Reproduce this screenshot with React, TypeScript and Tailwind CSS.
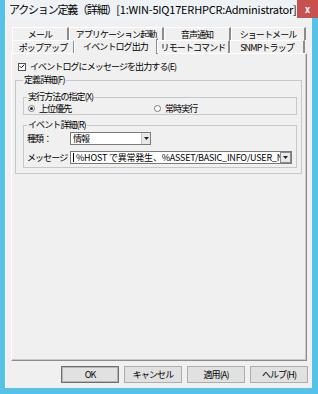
import { Check } from 'lucide-react';

function BackTab({ label, w }: { label: string; w: string }) {
  return (
    <div className={`${w} h-[13px] flex items-center justify-center whitespace-nowrap border-t border-l border-t-white border-l-white border-r-2 border-r-[#8c8c8c] bg-[#f0f0f0]`}>
      {label}
    </div>
  );
}

function Radio({ checked, label }: { checked?: boolean; label: string }) {
  return (
    <div className="flex items-center gap-[4px]">
      <span className="w-[7px] h-[7px] rounded-full border border-[#7a7a7a] bg-white flex items-center justify-center">
        {checked && <span className="w-[3px] h-[3px] rounded-full bg-[#222]" />}
      </span>
      <span>{label}</span>
    </div>
  );
}

function Arrow() {
  return (
    <svg width="5" height="3" viewBox="0 0 5 3">
      <path d="M0 0h5L2.5 3z" fill="#222" />
    </svg>
  );
}

function Btn({ label, def }: { label: string; def?: boolean }) {
  return (
    <button
      className={`w-[58px] h-[17px] flex items-center justify-center bg-[#e1e1e1] border ${
        def ? 'border-[#6e6e6e] shadow-[inset_0_0_0_1px_#b5b5b5]' : 'border-[#adadad]'
      }`}
    >
      {label}
    </button>
  );
}

export default function App() {
  return (
    <div className="w-[318px] h-[394px] bg-[#56c2e8] flex flex-col pl-[5px] pr-[6px] pb-[6px] overflow-hidden text-[9px] tracking-[-0.9px] leading-none text-black font-['Noto_Sans_CJK_JP',sans-serif]">
      {/* title bar */}
      <div className="h-[21px] bg-[#eef2f4] flex items-start justify-between">
        <span className="pl-[4px] pt-[4px] text-[11px] whitespace-nowrap">
          <span className="tracking-[-1.2px]">アクション定義（詳細）</span>
          <span className="tracking-[-0.2px]">[1:WIN-5IQ17ERHPCR:Administrator]</span>
        </span>
        <div className="w-[22px] h-[18px] mr-[1px] shrink-0 bg-[#c75050] flex items-center justify-center text-white text-[9px] font-bold tracking-normal">
          x
        </div>
      </div>

      {/* client area */}
      <div className="flex-1 bg-[#f0f0f0] border-l border-white flex flex-col">
        <div className="mt-[6px] ml-[5px] mr-[5px] flex flex-col">
          {/* tab rows */}
          <div className="flex pl-[1px]">
            <BackTab label="メール" w="w-[57px]" />
            <BackTab label="アプリケーション起動" w="w-[95px]" />
            <BackTab label="音声通知" w="w-[67px]" />
            <BackTab label="ショートメール" w="w-[75px]" />
          </div>
          <div className="flex pl-[1px] h-[13px] items-end relative z-10">
            <BackTab label="ポップアップ" w="w-[63px]" />
            <div className="w-[84px] h-[16px] -ml-[1px] -mr-[1px] mb-[-1px] flex items-center justify-center whitespace-nowrap bg-[#f0f0f0] border-t border-l border-t-white border-l-white border-r-2 border-r-[#8c8c8c]">
              イベントログ出力
            </div>
            <BackTab label="リモートコマンド" w="w-[73px]" />
            <BackTab label="SNMPトラップ" w="w-[75px]" />
          </div>

          {/* tab panel */}
          <div className="h-[308px] border border-t-white border-l-white border-r-[#8c8c8c] border-b-[#8c8c8c] shadow-[inset_-1px_-1px_0_#c8c8c8] flex flex-col">
            <div className="mt-[8px] ml-[6px] flex items-center gap-[4px]">
              <span className="w-[8px] h-[8px] border border-[#555] bg-white flex items-center justify-center">
                <Check size={7} strokeWidth={4} />
              </span>
              <span>イベントログにメッセージを出力する(E)</span>
            </div>

            {/* 定義詳細 */}
            <fieldset className="min-w-0 mt-[3px] ml-[3px] mr-[4px] border border-[#c4c8cc] p-0">
              <legend className="ml-[7px] px-[1px] h-[12px] leading-[12px]">定義詳細(F)</legend>
              <div className="pl-[7px] pr-[4px] pt-[5px] pb-[5px] flex flex-col">
                <fieldset className="min-w-0 border border-[#c4c8cc] p-0">
                  <legend className="ml-[3px] px-[1px] h-[12px] leading-[12px]">実行方法の指定(X)</legend>
                  <div className="h-[10px] mb-[1px] pl-[4px] flex items-center">
                    <div className="w-[126px]">
                      <Radio checked label="上位優先" />
                    </div>
                    <Radio label="常時実行" />
                  </div>
                </fieldset>

                <fieldset className="min-w-0 mt-[4px] border border-[#c4c8cc] p-0">
                  <legend className="ml-[3px] px-[1px] h-[12px] leading-[12px]">イベント詳細(R)</legend>
                  <div className="pl-[3px] pr-[4px] pt-[1px] pb-[3px] flex flex-col gap-[6px]">
                    <div className="flex items-center">
                      <span className="w-[43px] whitespace-nowrap">種類：</span>
                      <div className="w-[81px] h-[13px] bg-white border border-[#7a7a7a] flex items-center justify-between">
                        <span className="pl-[2px]">情報</span>
                        <span className="w-[9px] h-[11px] bg-[#e8e8e8] border-l border-[#c8c8c8] flex items-center justify-center">
                          <Arrow />
                        </span>
                      </div>
                    </div>
                    <div className="flex items-center">
                      <span className="w-[43px] whitespace-nowrap">メッセージ：</span>
                      <div className="flex-1 min-w-0 h-[13px] bg-white border border-[#7a7a7a] flex items-center">
                        <span className="w-px h-[9px] bg-black ml-[2px] shrink-0" />
                        <span className="flex-1 min-w-0 overflow-hidden whitespace-nowrap pl-[2px] tracking-[-0.2px]">
                          %HOST で異常発生、%ASSET/BASIC_INFO/USER_NAME%
                        </span>
                        <span className="w-[11px] h-[11px] shrink-0 bg-[#e8e8e8] border border-[#8a8a8a] flex items-center justify-center">
                          <Arrow />
                        </span>
                      </div>
                    </div>
                  </div>
                </fieldset>
              </div>
            </fieldset>
          </div>
        </div>

        {/* buttons */}
        <div className="mt-[5px] mr-[4px] flex justify-end gap-[5px]">
          <Btn label="OK" def />
          <Btn label="キャンセル" />
          <Btn label="適用(A)" />
          <Btn label="ヘルプ(H)" />
        </div>
      </div>
    </div>
  );
}
